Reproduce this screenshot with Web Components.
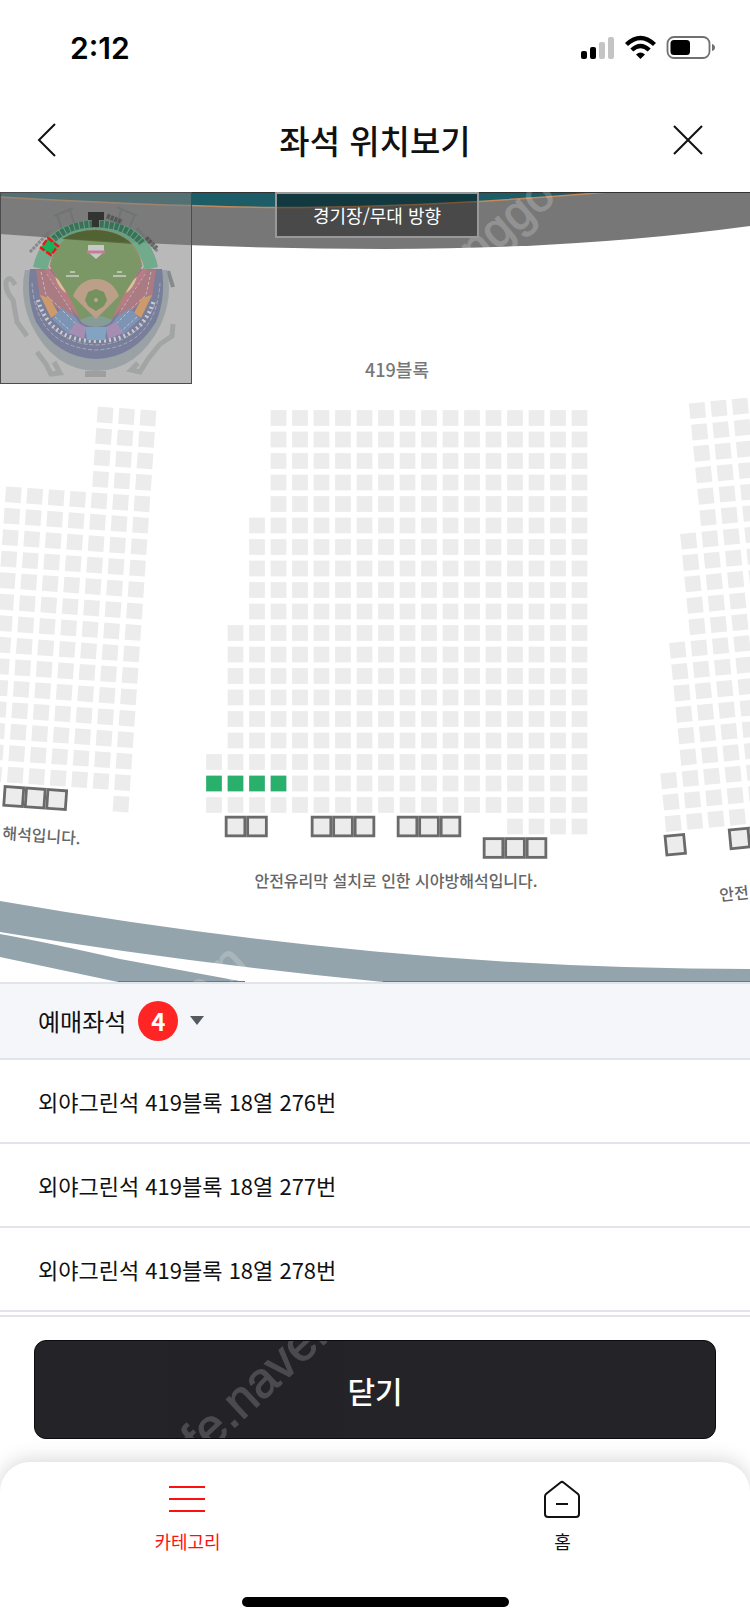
<!DOCTYPE html>
<html lang="ko">
<head>
<meta charset="utf-8">
<meta name="viewport" content="width=device-width, initial-scale=1">
<title>좌석 위치보기</title>
<style>
  body {
    margin: 0;
    background: #fff;
    color: #111;
    font-family: "Noto Sans CJK KR", sans-serif;
  }
</style>
</head>
<body>
<status-bar>2:12</status-bar>
<title-bar>좌석 위치보기</title-bar>
<seat-map>경기장/무대 방향</seat-map>
<seat-list count="4">
  <span slot="label">예매좌석</span>
  <seat-row>외야그린석 419블록 18열 276번</seat-row>
  <seat-row>외야그린석 419블록 18열 277번</seat-row>
  <seat-row>외야그린석 419블록 18열 278번</seat-row>
</seat-list>
<action-bar>닫기</action-bar>
<tab-bar>
  <tab-item icon="menu" active>카테고리</tab-item>
  <tab-item icon="home">홈</tab-item>
</tab-bar>

<script>
/** Registers an element whose open shadow root holds the given markup. */
function define(name, render) {
  window.customElements.define(name, class extends HTMLElement {
    constructor() {
      super();
      const template = document.createElement('template');
      template.innerHTML = render(this);
      this._shadowRoot = this.attachShadow({ mode: 'open' });
      this._shadowRoot.appendChild(template.content.cloneNode(true));
    }
  });
}

define('status-bar', () => `
<style>
  :host {
    display: flex;
    align-items: center;
    justify-content: space-between;
    height: 96px;
    padding: 0 34px 0 70px;
    font: 600 30px/36px Inter, sans-serif;
    color: #000;
  }
  svg { display: block; }
</style>
<slot></slot>
<svg width="136" height="26" viewBox="0 0 136 26" aria-hidden="true">
  <rect x="1" y="16" width="6" height="8" rx="2"/>
  <rect x="10" y="12" width="6" height="12" rx="2"/>
  <rect x="19" y="7" width="6" height="17" rx="2" fill="#c4c4c4"/>
  <rect x="28" y="2" width="6" height="22" rx="2" fill="#c4c4c4"/>
  <g fill="none" stroke="#000" stroke-width="4.4">
    <path d="M46.500 9.500 Q60.500 -3.500 74.500 9.500"/>
    <path d="M51.800 15 Q60.500 7 69.200 15"/>
  </g>
  <path d="M56 19.500 Q60.500 15.500 65 19.500 L60.500 24 Z"/>
  <rect x="87.500" y="2" width="42" height="21" rx="6.500" fill="none" stroke="#707070" stroke-width="1.800"/>
  <rect x="90.500" y="5" width="19.500" height="15" rx="3.500"/>
  <path d="M132 9 Q135 10 135 12.500 Q135 15 132 16 Z" fill="#707070"/>
</svg>
`);

define('title-bar', () => `
<style>
  :host {
    display: grid;
    grid-template-columns: 1fr auto 1fr;
    align-items: center;
    height: 96px;
    padding: 0 32px 8px;
    box-sizing: border-box;
  }
  h1 {
    margin: 0;
    font-size: 33px;
    line-height: 48px;
    font-weight: 500;
  }
  button {
    width: 32px;
    height: 44px;
    padding: 0;
    border: none;
    background: none;
  }
  .close {
    justify-self: end;
    margin-right: 14px;
  }
  svg {
    display: block;
    fill: none;
    stroke: #111;
    stroke-width: 2;
  }
</style>
<button type="button" aria-label="뒤로">
  <svg width="32" height="36" viewBox="0 0 32 36"><path d="M23 2 L7 18 L23 34"/></svg>
</button>
<h1><slot></slot></h1>
<button class="close" type="button" aria-label="닫기">
  <svg width="32" height="36" viewBox="0 0 32 36"><path d="M2 4 L30 32 M30 4 L2 32"/></svg>
</button>
`);

const SEAT = 15.7;
const PITCH = 21.5;

/* Each range is [first row, last row, first column, last column], counted
   from the block's own origin, which is the centre of seat 0/0. */
const blocks = [
  {
    x: 148, y: 226, angle: 4,
    seats: [[0, 3, -2, 0], [4, 17, -8, 0], [18, 18, 0, 0]],
    blocked: [[18, 18, -5, -3]],
  },
  {
    x: 278.500, y: 226, angle: 0,
    seats: [[0, 4, 0, 14], [5, 9, -1, 14], [10, 15, -2, 14], [16, 18, -3, 14], [19, 19, 11, 14]],
    blocked: [[19, 19, -2, -1], [19, 19, 2, 4], [19, 19, 6, 8], [20, 20, 10, 12]],
    booked: [[17, 17, -3, 0]],
  },
  {
    x: 697.500, y: 218.500, angle: -5.600,
    seats: [[0, 5, 0, 3], [6, 10, -1, 3], [11, 16, -2, 3], [17, 19, -3, 3]],
    blocked: [[20, 20, -3, -3], [20, 20, 0, 1]],
  },
];

function drawSeats(ranges, className, size) {
  let out = '';
  for (const [rowFrom, rowTo, colFrom, colTo] of ranges || []) {
    for (let row = rowFrom; row <= rowTo; row++) {
      for (let col = colFrom; col <= colTo; col++) {
        const x = col * PITCH - size / 2;
        const y = row * PITCH - size / 2;
        out += `<rect class="${className}" x="${x}" y="${y}" width="${size}" height="${size}"/>`;
      }
    }
  }
  return out;
}

function drawBlock({ x, y, angle, seats, blocked, booked }) {
  return `<g transform="translate(${x} ${y}) rotate(${angle})">
    ${drawSeats(seats, 'seat', SEAT)}
    ${drawSeats(blocked, 'blocked', 18.700)}
    ${drawSeats(booked, 'booked', SEAT)}
  </g>`;
}

define('seat-map', () => `
<style>
  :host {
    display: block;
    position: relative;
    overflow: hidden;
  }
  .map {
    display: block;
    width: 100%;
    height: auto;
  }
  .seat { fill: #ececec; }
  .booked { fill: #29b06c; }
  .blocked { fill: #ececec; stroke: #6a6a6a; stroke-width: 2.800; }
  .note { font-size: 16px; font-weight: 500; fill: #666; }
  .name { font-size: 18px; font-weight: 500; fill: #777; }
  .mark {
    font: 48px "Liberation Sans", sans-serif;
    fill: #fff;
    stroke: #fff;
    opacity: .2;
  }
  mini-map {
    position: absolute;
    top: 0;
    left: 0;
  }
  .direction {
    position: absolute;
    top: 0;
    left: 50%;
    transform: translateX(-50%);
    box-sizing: border-box;
    width: 204px;
    height: 46px;
    margin-left: 2px;
    border: 2px solid #999;
    background: rgba(0, 0, 0, .38);
    color: #fff;
    font-size: 18px;
    line-height: 42px;
    text-align: center;
  }
</style>
<svg class="map" viewBox="0 0 750 790">
  <path fill="#777" d="M0 0 H750 V34 Q580 57 385 57 Q190 57 0 42 Z"/>
  <path fill="#1d5d68" stroke="#c08a5c" stroke-width="1.500" d="M-2 -2 V5 Q150 14 270 15.500 Q430 16 632 -2 Z"/>
  <path fill="#333" d="M0 0 H750 V1 H0 Z"/>
  ${blocks.map(drawBlock).join('')}
  <text class="name" x="397" y="185" text-anchor="middle">419블록</text>
  <text class="note" x="396" y="695" text-anchor="middle">안전유리막 설치로 인한 시야방해석입니다.</text>
  <text class="note" x="2" y="647" transform="rotate(4 2 647)">해석입니다.</text>
  <text class="note" x="720" y="709" transform="rotate(-6 720 709)">안전</text>
  <g fill="#93a4ac">
    <path d="M0 709 Q190 742 375 759.500 Q560 777 750 777 V790 H383 Q180 770 0 740 Z"/>
    <path d="M0 742 Q50 751 120 767 L245 790 H118 L0 765 Z"/>
  </g>
  <path fill="#5f7d87" d="M118 789 H245 V790 H118 Z M383 789 H750 V790 H383 Z"/>
  <g aria-hidden="true">
    <text class="mark" transform="translate(476 76) rotate(-40)">nggo</text>
    <text class="mark" transform="translate(200 819) rotate(-43)">e.n</text>
  </g>
</svg>
<mini-map></mini-map>
<div class="direction"><slot></slot></div>
`);

define('mini-map', () => `
<style>
  :host {
    display: block;
    box-sizing: border-box;
    width: 192px;
    height: 192px;
    border: 1px solid #4c4c4c;
    background: rgba(128, 128, 128, .55);
  }
  svg { display: block; }
</style>
<svg width="190" height="190" viewBox="1 1 190 190" aria-hidden="true">
  <g opacity=".82">
    <g fill="none" stroke="#999c9c" stroke-width="5" opacity=".8">
      <path d="M15 93 Q10 82 6 90 Q5 99 13 108 L17 130 L27 144"/>
      <path d="M37 160 L46 172 L51 182 L60 181 L54 170"/>
      <path d="M173 132 L172 144 L160 152 L148 167 L140 180 L131 178 L138 171"/>
    </g>
    <g fill="none" stroke="#6d7272" stroke-width="2" opacity=".8">
      <path d="M54 24 L73 16 M57 22 L62 38 M70 18 L75 34 M117 15 L137 24 M121 18 L117 34 M134 24 L128 40"/>
      <path d="M30 60 L50 39 M137 36 L158 60" stroke-width="3" stroke-dasharray="3 1"/>
      <path d="M107 24 L122 30 M146 46 L157 57" stroke="#444" stroke-width="5" stroke-dasharray="3 1"/>
      <path d="M168 79 L173 95" stroke-width="4"/>
    </g>
    <!-- stands -->
    <g opacity=".85">
      <path fill="#8e9a9e" d="M25 78 Q19 105 31 132 Q53 178 96 179 Q139 178 161 132 Q173 105 167 78 Z"/>
      <path fill="#5f668f" d="M30 77 Q26 106 36 130 Q58 166 96 167 Q134 166 156 130 Q166 106 162 77 Z"/>
      <path fill="none" stroke="#a1a6bc" stroke-width="1" d="M32 91 Q36 155 96 158 Q156 155 160 91 M36 110 Q54 152 96 153 Q138 152 156 110" stroke-dasharray="4 2"/>
      <path fill="none" stroke="#d5d5da" stroke-width="4" d="M38 108 Q50 149 96 149 Q142 149 154 108" stroke-dasharray="2 3"/>
      <path fill="#a5626d" d="M36 78 L50 77 L75 124 L67 126 L46 104 L40 106 Z M156 78 L142 77 L117 124 L125 126 L146 104 L152 106 Z"/>
      <path fill="none" stroke="#d1b8bd" stroke-width="1" stroke-dasharray="3 2" d="M41 80 L46 103 L70 125 M47 82 L72 120 M151 80 L146 103 L122 125 M145 82 L120 120"/>
      <path fill="#d68e4a" d="M40 103 L50 106 L58 121 L51 126 Z M152 103 L142 106 L134 121 L141 126 Z"/>
      <path fill="#6685b4" d="M62 116 L76 126 L86 142 L68 142 L52 127 Z M130 116 L116 126 L106 142 L124 142 L140 127 Z"/>
      <path fill="none" stroke="#bcc7dc" stroke-dasharray="3 2" d="M55 125 L74 142 M63 119 L81 137 M137 125 L118 142 M129 119 L111 137"/>
      <path fill="#a07cb0" d="M76 130 L86 135 L84 147 L69 141 Z M116 130 L106 135 L108 147 L123 141 Z"/>
      <path fill="#6d9bc9" d="M85 135 H107 L105 148 H87 Z"/>
      <path fill="#b9626e" d="M48 75 L66 98 L72 107 L80 121 L77 124 L62 104 L46 80 Z M144 75 L126 98 L120 107 L112 121 L115 124 L130 104 L146 80 Z"/>
      <path fill="#d6cf92" d="M55 85 Q66 91 66 101 Q59 97 55 85 Z M137 85 Q126 91 126 101 Q133 97 137 85 Z"/>
    </g>
    <path fill="#62a883" d="M33 75 Q43 30 96 28 Q149 30 158 75 L145 78 Q136 41 96 38 Q56 41 47 78 Z"/>
    <path fill="none" stroke="#2f7052" stroke-width="7" stroke-dasharray="4 1" d="M50 51 Q66 32 96 32 Q126 32 142 51"/>
    <!-- field -->
    <path fill="#6f9054" stroke="#ad7763" stroke-width="1" d="M50 74 Q56 40 96 38 Q136 40 142 74 L126 99 L111 129 Q96 139 81 129 L66 99 Z"/>
    <path fill="#44591f" d="M62 47 Q76 38 96 38 Q119 39 132 52 Z" opacity=".9"/>
    <path fill="#7b9790" d="M80 128 Q96 120 112 128 Q109 134 96 135 Q83 134 80 128 Z"/>
    <path fill="#bd9a7e" d="M73 104 Q80 87 96 87 Q112 87 119 104 L96 127 Z"/>
    <path fill="#648a4a" d="M96 97 L104 100 L107 108 L104 114 L96 119 L88 114 L85 108 L88 100 Z"/>
    <circle cx="96" cy="108" r="2" fill="#c6a38c"/>
    <path fill="#ccc" d="M88 53 H104 V60 L96 67 L88 60 Z"/>
    <path fill="none" stroke="#c8738c" stroke-width="3" d="M87 60 H105"/>
    <path fill="none" stroke="#b8c4ab" stroke-width="2" d="M70 80 H75 M66 84 H79 M117 80 H122 M113 84 H126"/>
    <path fill="#9a9a9a" d="M85 179 H106 V185 H85 Z"/>
  </g>
  <path fill="#333" d="M88 20 H104 V28 H99 V35 H92 V28 H88 Z"/>
  <path fill="#16b35c" stroke="#f01414" stroke-width="2.500" stroke-dasharray="6 2" d="M48 46 L58 54 L51 63 L41 56 Z"/>
</svg>
`);

define('seat-list', (host) => `
<style>
  :host { display: block; }
  button {
    display: flex;
    align-items: center;
    box-sizing: border-box;
    width: 100%;
    height: 78px;
    padding: 0 38px;
    border: solid #e1e4eb;
    border-width: 2px 0;
    background: #f4f6fa;
    color: inherit;
    font: inherit;
    font-size: 24px;
    line-height: 36px;
  }
  .count {
    width: 40px;
    height: 40px;
    margin: 0 12px;
    border-radius: 50%;
    background: #ff2525;
    color: #fff;
    font-size: 24px;
    font-weight: 700;
    line-height: 40px;
  }
</style>
<button type="button" aria-expanded="true">
  <slot name="label"></slot>
  <span class="count">${host.getAttribute('count')}</span>
  <svg width="14" height="10" viewBox="0 0 14 10"><path d="M0 0 H14 L7 9 Z" fill="#555a60"/></svg>
</button>
<div role="list"><slot></slot></div>
`);

define('seat-row', (host) => {
  host.setAttribute('role', 'listitem');
  return `
<style>
  :host {
    display: flex;
    align-items: center;
    box-sizing: border-box;
    height: 84px;
    padding: 0 38px;
    border-bottom: 2px solid #e1e4eb;
    font-size: 22px;
    line-height: 32px;
  }
</style>
<slot></slot>
`;
});

define('action-bar', () => `
<style>
  :host {
    display: block;
    margin-top: 3px;
    padding: 23px 34px;
    border-top: 2px solid #e1e4eb;
  }
  button {
    display: block;
    position: relative;
    overflow: hidden;
    box-sizing: border-box;
    width: 100%;
    height: 99px;
    padding: 0;
    border: 1px solid #0c0c10;
    border-radius: 12px;
    background: #242328;
    color: #fff;
    font: inherit;
    font-size: 30px;
    font-weight: 500;
  }
  svg {
    position: absolute;
    top: 0;
    left: 0;
    font: 50px "Liberation Sans", sans-serif;
    fill: #fff;
    stroke: #fff;
    opacity: .18;
  }
</style>
<button type="button">
  <svg width="320" height="99" aria-hidden="true">
    <text transform="translate(166 118) rotate(-43)">fe.naver</text>
  </svg>
  <slot></slot>
</button>
`);

define('tab-bar', () => `
<style>
  :host {
    display: block;
    position: relative;
    padding: 17px 0 16px;
    border-radius: 30px 30px 0 0;
    background: #fff;
    box-shadow: 0 -2px 20px rgba(0, 0, 0, .16);
  }
  nav {
    display: grid;
    grid-template-columns: 1fr 1fr;
  }
  .home-indicator {
    width: 267px;
    height: 10px;
    margin: 44px auto 0;
    border-radius: 5px;
    background: #000;
  }
</style>
<nav><slot></slot></nav>
<div class="home-indicator"></div>
`);

const tabIcons = {
  menu: '<path d="M1 8 H37 M1 20 H37 M1 32 H37"/>',
  home: '<path d="M17.500 3.500 Q19 2.300 20.500 3.500 L35 15 Q36 16 36 17.500 V35 Q36 38 33 38 H5 Q2 38 2 35 V17.500 Q2 16 3 15 Z M13 25 H25"/>',
};

define('tab-item', (host) => `
<style>
  :host { display: block; }
  a {
    display: flex;
    flex-direction: column;
    align-items: center;
    gap: 10px;
    color: #111;
    font-size: 18px;
    line-height: 24px;
    text-decoration: none;
  }
  :host([active]) a { color: #ff1010; }
  svg {
    fill: none;
    stroke: currentColor;
    stroke-width: 2;
  }
</style>
<a href="#">
  <svg width="40" height="40" viewBox="0 0 40 40" aria-hidden="true">${tabIcons[host.getAttribute('icon')]}</svg>
  <span><slot></slot></span>
</a>
`);
</script>
</body>
</html>
